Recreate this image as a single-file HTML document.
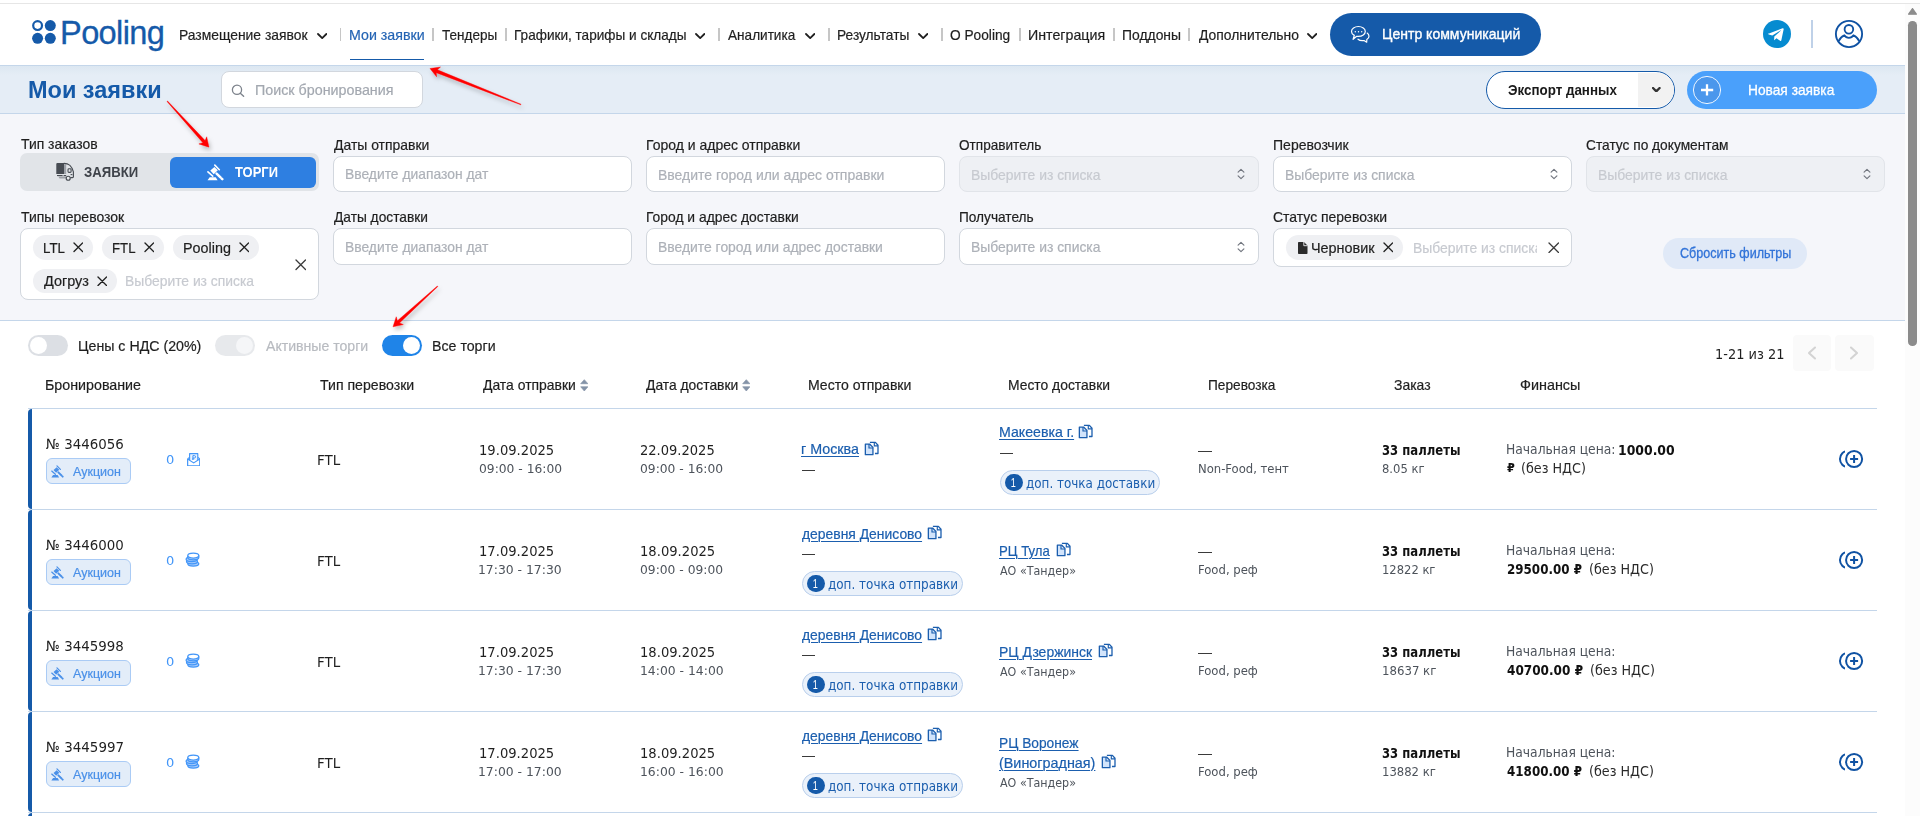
<!DOCTYPE html>
<html lang="ru"><head><meta charset="utf-8"><title>Pooling — Мои заявки</title>
<style>
html,body{margin:0;padding:0;background:#fff;overflow:hidden}
#root{position:relative;width:1920px;height:816px;overflow:hidden;background:#fff}
.b{position:absolute;box-sizing:border-box;display:block}
.t{position:absolute;white-space:nowrap;line-height:1;transform-origin:0 50%}
.f-ls{font-family:"Liberation Sans",sans-serif;-webkit-text-stroke:0.2px currentColor}
.f-dv{font-family:"DejaVu Sans",sans-serif}
.f-dvc{font-family:"DejaVu Sans Condensed","DejaVu Sans",sans-serif;font-stretch:condensed}
a.t{text-decoration:underline}

</style></head><body>
<div id="root">
<div class="b " style="left:0px;top:0px;width:1920px;height:66px;background:#fff;"></div>
<div class="b " style="left:0px;top:3px;width:1920px;height:1px;background:#e6e6e6;"></div>
<div class="b " style="left:0px;top:65px;width:1905px;height:1px;background:#c4d6ea;"></div>
<svg class="b" style="left:31px;top:19px;" width="26" height="26" viewBox="0 0 26 26"><circle cx="6.6" cy="6.6" r="4.4" fill="none" stroke="#155aa9" stroke-width="2.2"/><circle cx="19.3" cy="6.6" r="5.5" fill="#155aa9"/><circle cx="6.6" cy="19.3" r="5.5" fill="#155aa9"/><circle cx="19.3" cy="19.3" r="5.5" fill="#155aa9"/></svg>
<span class="t f-ls " style="left:60.1px;top:16.72px;font-size:32.6px;color:#155aa9;letter-spacing:-0.66px;-webkit-text-stroke:0.3px #155aa9;">Pooling</span>
<span class="t f-ls nav" style="left:179.39px;top:28.05px;font-size:14.6px;color:#1f1f1f;transform:scaleX(0.9508);">Размещение заявок</span>
<svg class="b" style="left:316.8px;top:32.550000000000004px;" width="10.4" height="6.1" viewBox="0 0 10.4 6.1"><path d="M1 1 L5.2 5.1 L9.4 1" fill="none" stroke="#1f1f1f" stroke-width="1.8" stroke-linecap="round" stroke-linejoin="round"/></svg>
<span class="t f-ls nav" style="left:349.36px;top:28.05px;font-size:14.6px;color:#2464b4;transform:scaleX(0.9737);">Мои заявки</span>
<span class="t f-ls nav" style="left:442.23px;top:28.05px;font-size:14.6px;color:#1f1f1f;transform:scaleX(0.927);">Тендеры</span>
<span class="t f-ls nav" style="left:514.41px;top:28.05px;font-size:14.6px;color:#1f1f1f;transform:scaleX(0.9309);">Графики, тарифы и склады</span>
<svg class="b" style="left:694.8px;top:32.550000000000004px;" width="10.4" height="6.1" viewBox="0 0 10.4 6.1"><path d="M1 1 L5.2 5.1 L9.4 1" fill="none" stroke="#1f1f1f" stroke-width="1.8" stroke-linecap="round" stroke-linejoin="round"/></svg>
<span class="t f-ls nav" style="left:728.2px;top:28.05px;font-size:14.6px;color:#1f1f1f;transform:scaleX(0.9312);">Аналитика</span>
<svg class="b" style="left:804.5999999999999px;top:32.550000000000004px;" width="10.4" height="6.1" viewBox="0 0 10.4 6.1"><path d="M1 1 L5.2 5.1 L9.4 1" fill="none" stroke="#1f1f1f" stroke-width="1.8" stroke-linecap="round" stroke-linejoin="round"/></svg>
<span class="t f-ls nav" style="left:837.1px;top:28.05px;font-size:14.6px;color:#1f1f1f;transform:scaleX(0.9404);">Результаты</span>
<svg class="b" style="left:917.8px;top:32.550000000000004px;" width="10.4" height="6.1" viewBox="0 0 10.4 6.1"><path d="M1 1 L5.2 5.1 L9.4 1" fill="none" stroke="#1f1f1f" stroke-width="1.8" stroke-linecap="round" stroke-linejoin="round"/></svg>
<span class="t f-ls nav" style="left:950.18px;top:28.05px;font-size:14.6px;color:#1f1f1f;transform:scaleX(0.9394);">О Pooling</span>
<span class="t f-ls nav" style="left:1027.86px;top:28.05px;font-size:14.6px;color:#1f1f1f;transform:scaleX(0.9738);">Интеграция</span>
<span class="t f-ls nav" style="left:1121.89px;top:28.05px;font-size:14.6px;color:#1f1f1f;transform:scaleX(0.9522);">Поддоны</span>
<span class="t f-ls nav" style="left:1198.63px;top:28.05px;font-size:14.6px;color:#1f1f1f;transform:scaleX(0.9512);">Дополнительно</span>
<svg class="b" style="left:1306.8px;top:32.550000000000004px;" width="10.4" height="6.1" viewBox="0 0 10.4 6.1"><path d="M1 1 L5.2 5.1 L9.4 1" fill="none" stroke="#1f1f1f" stroke-width="1.8" stroke-linecap="round" stroke-linejoin="round"/></svg>
<div class="b " style="left:339.9px;top:27.5px;width:1.4px;height:13.5px;background:#c6c6c6;"></div>
<div class="b " style="left:432.2px;top:27.5px;width:1.4px;height:13.5px;background:#c6c6c6;"></div>
<div class="b " style="left:505.4px;top:27.5px;width:1.4px;height:13.5px;background:#c6c6c6;"></div>
<div class="b " style="left:718.4px;top:27.5px;width:1.4px;height:13.5px;background:#c6c6c6;"></div>
<div class="b " style="left:828.4px;top:27.5px;width:1.4px;height:13.5px;background:#c6c6c6;"></div>
<div class="b " style="left:941.1999999999999px;top:27.5px;width:1.4px;height:13.5px;background:#c6c6c6;"></div>
<div class="b " style="left:1019.4px;top:27.5px;width:1.4px;height:13.5px;background:#c6c6c6;"></div>
<div class="b " style="left:1113.4px;top:27.5px;width:1.4px;height:13.5px;background:#c6c6c6;"></div>
<div class="b " style="left:1188.2px;top:27.5px;width:1.4px;height:13.5px;background:#c6c6c6;"></div>
<div class="b " style="left:350px;top:58.7px;width:74px;height:1.4px;background:#155aa9;"></div>
<div class="b " style="left:1330px;top:13px;width:211px;height:43px;background:#155aa9;border-radius:22px;"></div>
<svg class="b" style="left:1350px;top:25px;" width="21" height="19" viewBox="0 0 21 19"><path d="M4.300 10.400C2.600 9.500 1.500 8.100 1.500 6.400C1.500 3.700 4.600 1.500 8.400 1.500S15.300 3.700 15.300 6.400S12.200 11.400 8.400 11.400C7.800 11.400 7.200 11.350 6.700 11.250L3.100 14.300Z" fill="none" stroke="#fff" stroke-width="1.200" stroke-linejoin="round"/><path d="M17.200 8.100C18.300 8.900 19 10 19 11.200C19 12.600 18.100 13.800 16.800 14.600L16.700 17.200L14 15.500C13.400 15.600 12.800 15.700 12.200 15.700C10.500 15.700 9 15.100 8 14.200" fill="none" stroke="#fff" stroke-width="1.200" stroke-linejoin="round" stroke-linecap="round"/><circle cx="5.300" cy="6.700" r=".7" fill="#fff"/><circle cx="8.500" cy="6.700" r=".7" fill="#fff"/><circle cx="11.700" cy="6.700" r=".7" fill="#fff"/></svg>
<span class="t f-ls " style="left:1382.08px;top:26.95px;font-size:14.6px;color:#fff;transform:scaleX(0.9624);-webkit-text-stroke:0.35px #fff;">Центр коммуникаций</span>
<svg class="b" style="left:1763px;top:20px;" width="28" height="28" viewBox="0 0 28 28"><circle cx="14" cy="14" r="14" fill="#068bd0"/><path d="M6 13.600l13.600-5.400c.65-.25 1.250.15 1.050 1.050l-2.300 10.900c-.18.800-.65.980-1.300.62l-3.550-2.620-1.720 1.650c-.2.200-.36.360-.72.360l.25-3.620 6.600-5.950c.3-.26-.06-.4-.44-.15l-8.150 5.130-3.520-1.100c-.76-.24-.78-.76.160-1.130z" fill="#fff"/></svg>
<div class="b " style="left:1811px;top:20px;width:1.6px;height:28px;background:#bfd1e8;"></div>
<svg class="b" style="left:1834px;top:19px;" width="30" height="30" viewBox="0 0 30 30"><circle cx="15" cy="15" r="13.100" fill="none" stroke="#0f52a3" stroke-width="1.850"/><circle cx="14.900" cy="10.300" r="4.300" fill="none" stroke="#0f52a3" stroke-width="1.850"/><path d="M4.500 22.300C5.800 19.300 8 17.200 10.300 16.300C11.300 17.900 13 18.900 14.900 18.900S18.500 17.900 19.500 16.300C21.800 17.200 24 19.300 25.400 22.300" fill="none" stroke="#0f52a3" stroke-width="1.850" stroke-linejoin="round"/></svg>
<div class="b " style="left:1905px;top:4px;width:15px;height:812px;background:#fcfcfc;"></div>
<div class="b " style="left:1908.2px;top:21px;width:8.6px;height:325px;background:#8b8b8b;border-radius:4.300px;"></div>
<svg class="b" style="left:1907px;top:7px;" width="11" height="9" viewBox="0 0 11 9"><path d="M1.600 7.200 L5.500 1.600 L9.400 7.200z" fill="#8b8b8b" stroke="#8b8b8b" stroke-width="1.200" stroke-linejoin="round"/></svg>
<div class="b " style="left:0px;top:66px;width:1905px;height:47px;background:#e5edf6;"></div>
<div class="b " style="left:0px;top:66px;width:1905px;height:9px;background:linear-gradient(#dce7f1,#e5edf6);"></div>
<div class="b " style="left:0px;top:113px;width:1905px;height:1px;background:#c4d6ea;"></div>
<span class="t f-ls " style="left:27.87px;top:79.17px;font-size:23.2px;color:#155aa9;font-weight:700;-webkit-text-stroke:0;transform:scaleX(1.0126);">Мои заявки</span>
<div class="b " style="left:220.5px;top:71px;width:202px;height:37px;background:#fff;border:1px solid #d2d7de;border-radius:8px;"></div>
<svg class="b" style="left:231px;top:84px;" width="14" height="13" viewBox="0 0 14 13"><circle cx="6" cy="5.800" r="4.600" fill="none" stroke="#7d838c" stroke-width="1.300"/><path d="M9.300 9.200l3.300 3" stroke="#7d838c" stroke-width="1.400" stroke-linecap="round"/></svg>
<span class="t f-ls " style="left:255.16px;top:82.82px;font-size:14.4px;color:#a3a8b0;transform:scaleX(0.9936);">Поиск бронирования</span>
<div class="b " style="left:1486px;top:71px;width:189px;height:38px;background:#fff;border:1.300px solid #155aa9;border-radius:19px;"><div class="b" style="left:150.800px;top:0.800px;width:35.800px;height:33.800px;background:#f2f2f2;border-radius:0 17px 17px 0"></div></div>
<span class="t f-ls " style="left:1508.27px;top:83.05px;font-size:14.6px;color:#1a1a1a;font-weight:700;-webkit-text-stroke:0;transform:scaleX(0.9158);">Экспорт данных</span>
<svg class="b" style="left:1652.0px;top:87.0px;" width="8.6" height="5.4" viewBox="0 0 8.6 5.4"><path d="M1 1 L4.3 4.4 L7.6 1" fill="none" stroke="#333" stroke-width="2.3" stroke-linecap="round" stroke-linejoin="round"/></svg>
<div class="b " style="left:1687px;top:71px;width:190px;height:38px;background:#4aa0fb;border-radius:19px;"></div>
<svg class="b" style="left:1692px;top:75px;" width="30" height="30" viewBox="0 0 30 30"><circle cx="15" cy="15" r="13.600" fill="#4b97ec" stroke="#fff" stroke-width="0.9"/><path d="M15 9.200v11.200M9 15h12.200" stroke="#fff" stroke-width="2.300"/></svg>
<span class="t f-ls " style="left:1748.2px;top:83.05px;font-size:14.6px;color:#fff;transform:scaleX(0.942);-webkit-text-stroke:0.3px #fff;">Новая заявка</span>
<div class="b " style="left:0px;top:114px;width:1905px;height:206px;background:#f5f6fa;"></div>
<div class="b " style="left:0px;top:320px;width:1905px;height:1px;background:#c4d6ea;"></div>
<span class="t f-ls " style="left:20.52px;top:136.79px;font-size:14.2px;color:#1f1f1f;transform:scaleX(0.9809);">Тип заказов</span>
<span class="t f-ls " style="left:333.53px;top:137.99px;font-size:14.2px;color:#1f1f1f;transform:scaleX(0.9827);">Даты отправки</span>
<span class="t f-ls " style="left:645.58px;top:137.99px;font-size:14.2px;color:#1f1f1f;transform:scaleX(0.9862);">Город и адрес отправки</span>
<span class="t f-ls " style="left:959.39px;top:137.99px;font-size:14.2px;color:#1f1f1f;transform:scaleX(0.9578);">Отправитель</span>
<span class="t f-ls " style="left:1272.58px;top:137.99px;font-size:14.2px;color:#1f1f1f;transform:scaleX(0.9884);">Перевозчик</span>
<span class="t f-ls " style="left:1585.81px;top:137.99px;font-size:14.2px;color:#1f1f1f;transform:scaleX(0.9678);">Статус по документам</span>
<div class="b " style="left:333px;top:156px;width:299px;height:36px;background:#fff;border:1px solid #d2d7de;border-radius:8px;"></div>
<span class="t f-ls " style="left:345.49px;top:167.19px;font-size:14.2px;color:#adb1b8;transform:scaleX(0.9766);">Введите диапазон дат</span>
<div class="b " style="left:646px;top:156px;width:299px;height:36px;background:#fff;border:1px solid #d2d7de;border-radius:8px;"></div>
<span class="t f-ls " style="left:658.48px;top:167.59px;font-size:14.2px;color:#adb1b8;transform:scaleX(0.9863);">Введите город или адрес отправки</span>
<div class="b " style="left:959px;top:156px;width:300px;height:36px;background:#eef0f4;border:1px solid #e1e4e9;border-radius:8px;"></div>
<span class="t f-ls " style="left:971.49px;top:167.59px;font-size:14.2px;color:#c7cad0;transform:scaleX(0.9804);">Выберите из списка</span>
<svg class="b" style="left:1235.7px;top:167.0px;" width="10" height="14" viewBox="0 0 10 14"><path d="M2.100 5.100L5 2.300l2.900 2.800M2.100 8.900L5 11.700l2.900-2.800" fill="none" stroke="#70757e" stroke-width="1.150" stroke-linecap="round" stroke-linejoin="round"/></svg>
<div class="b " style="left:1273px;top:156px;width:299px;height:36px;background:#fff;border:1px solid #d2d7de;border-radius:8px;"></div>
<span class="t f-ls " style="left:1285.49px;top:167.59px;font-size:14.2px;color:#adb1b8;transform:scaleX(0.9804);">Выберите из списка</span>
<svg class="b" style="left:1548.7px;top:167.0px;" width="10" height="14" viewBox="0 0 10 14"><path d="M2.100 5.100L5 2.300l2.900 2.800M2.100 8.900L5 11.700l2.900-2.800" fill="none" stroke="#70757e" stroke-width="1.150" stroke-linecap="round" stroke-linejoin="round"/></svg>
<div class="b " style="left:1586px;top:156px;width:299px;height:36px;background:#eef0f4;border:1px solid #e1e4e9;border-radius:8px;"></div>
<span class="t f-ls " style="left:1598.49px;top:167.59px;font-size:14.2px;color:#c7cad0;transform:scaleX(0.9804);">Выберите из списка</span>
<svg class="b" style="left:1861.7px;top:167.0px;" width="10" height="14" viewBox="0 0 10 14"><path d="M2.100 5.100L5 2.300l2.900 2.800M2.100 8.900L5 11.700l2.900-2.800" fill="none" stroke="#70757e" stroke-width="1.150" stroke-linecap="round" stroke-linejoin="round"/></svg>
<div class="b " style="left:20px;top:153px;width:299px;height:38px;background:#e1e4e8;border-radius:7px;"></div>
<div class="b " style="left:170px;top:156.5px;width:146px;height:31px;background:#2e7fe1;border-radius:6px;"></div>
<svg class="b" style="left:55px;top:162px;" width="20" height="19" viewBox="0 0 20 19"><path d="M1.300 2a1 1 0 0 1 1-1H9v11H1.300z" fill="#474c53"/><path d="M9 2.300h2.200V12H9z" fill="#9da1a8"/><path d="M9 1.400c4.500 0 7.500 1.600 9.400 8.500v4.800c0 .5-.4.900-.9.900h-1.800" fill="none" stroke="#474c53" stroke-width="1.150" stroke-linecap="round"/><rect x="13" y="6.800" width="3.100" height="3.600" rx=".9" fill="none" stroke="#474c53" stroke-width="1.100"/><path d="M15.600 12.600h1.800" stroke="#474c53" stroke-width="1.100"/><path d="M2 13h5.600v1.100H2z" fill="#474c53"/><path d="M3.300 14.500h8l-.5 2H4.500z" fill="#9da1a8"/><path d="M8.600 13h2.600v1.100H8.600z" fill="#474c53"/><circle cx="13.200" cy="16.200" r="2" fill="#e9ebee" stroke="#474c53" stroke-width="1.150"/></svg>
<span class="t f-ls " style="left:83.67px;top:165.74px;font-size:13.9px;color:#3f434a;font-weight:700;-webkit-text-stroke:0;transform:scaleX(0.9473);">ЗАЯВКИ</span>
<svg class="b" style="left:206.5px;top:163.7px;" width="17" height="17" viewBox="0 0 17 17"><g stroke="#fff" stroke-linecap="round" fill="none"><path d="M7.800 1.100L12.300 5.700M0.950 7.900L5.700 12.100" stroke-width="1.600"/><path d="M9.600 9.600L13.500 13.400M14.700 14.600L15.300 15.200" stroke-width="2.500"/></g><g fill="#fff"><path d="M3.300 6.500L7.400 3.100L10.800 6.300L6.700 10.200z"/><path d="M0.500 16.300L10.600 16.300L8.700 13.200L2.700 13.200z"/></g></svg>
<span class="t f-ls " style="left:235.37px;top:165.74px;font-size:13.9px;color:#fff;font-weight:700;-webkit-text-stroke:0;transform:scaleX(0.9326);">ТОРГИ</span>
<span class="t f-ls " style="left:20.52px;top:209.99px;font-size:14.2px;color:#1f1f1f;transform:scaleX(0.9855);">Типы перевозок</span>
<span class="t f-ls " style="left:333.53px;top:209.99px;font-size:14.2px;color:#1f1f1f;transform:scaleX(0.9681);">Даты доставки</span>
<span class="t f-ls " style="left:645.59px;top:209.99px;font-size:14.2px;color:#1f1f1f;transform:scaleX(0.977);">Город и адрес доставки</span>
<span class="t f-ls " style="left:958.91px;top:209.99px;font-size:14.2px;color:#1f1f1f;transform:scaleX(0.9618);">Получатель</span>
<span class="t f-ls " style="left:1273.0px;top:209.99px;font-size:14.2px;color:#1f1f1f;transform:scaleX(0.9842);">Статус перевозки</span>
<div class="b " style="left:333px;top:228px;width:299px;height:37px;background:#fff;border:1px solid #d2d7de;border-radius:8px;"></div>
<span class="t f-ls " style="left:345.49px;top:239.99px;font-size:14.2px;color:#adb1b8;transform:scaleX(0.9766);">Введите диапазон дат</span>
<div class="b " style="left:646px;top:228px;width:299px;height:37px;background:#fff;border:1px solid #d2d7de;border-radius:8px;"></div>
<span class="t f-ls " style="left:658.49px;top:239.99px;font-size:14.2px;color:#adb1b8;transform:scaleX(0.98);">Введите город или адрес доставки</span>
<div class="b " style="left:959px;top:228px;width:300px;height:37px;background:#fff;border:1px solid #d2d7de;border-radius:8px;"></div>
<span class="t f-ls " style="left:971.49px;top:239.99px;font-size:14.2px;color:#adb1b8;transform:scaleX(0.9804);">Выберите из списка</span>
<svg class="b" style="left:1235.7px;top:239.5px;" width="10" height="14" viewBox="0 0 10 14"><path d="M2.100 5.100L5 2.300l2.900 2.800M2.100 8.900L5 11.700l2.900-2.800" fill="none" stroke="#70757e" stroke-width="1.150" stroke-linecap="round" stroke-linejoin="round"/></svg>
<div class="b " style="left:20px;top:228px;width:299px;height:72px;background:#fff;border:1px solid #d2d7de;border-radius:8px;"></div>
<div class="b " style="left:33px;top:235px;width:60px;height:25px;background:#eff0f3;border-radius:13px;"></div>
<span class="t f-ls " style="left:43.44px;top:241.19px;font-size:14.2px;color:#1f1f1f;transform:scaleX(0.9374);">LTL</span>
<svg class="b" style="left:72.7px;top:242.39999999999998px;" width="10.6" height="10.6" viewBox="0 0 10.6 10.6"><path d="M1 1L9.6 9.6M9.6 1L1 9.6" stroke="#222" stroke-width="1.35" stroke-linecap="round"/></svg>
<div class="b " style="left:102px;top:235px;width:62px;height:25px;background:#eff0f3;border-radius:13px;"></div>
<span class="t f-ls " style="left:112.44px;top:241.19px;font-size:14.2px;color:#1f1f1f;transform:scaleX(0.9305);">FTL</span>
<svg class="b" style="left:143.7px;top:242.39999999999998px;" width="10.6" height="10.6" viewBox="0 0 10.6 10.6"><path d="M1 1L9.6 9.6M9.6 1L1 9.6" stroke="#222" stroke-width="1.35" stroke-linecap="round"/></svg>
<div class="b " style="left:173px;top:235px;width:86px;height:25px;background:#eff0f3;border-radius:13px;"></div>
<span class="t f-ls " style="left:183.35px;top:241.19px;font-size:14.2px;color:#1f1f1f;transform:scaleX(1.0111);">Pooling</span>
<svg class="b" style="left:238.7px;top:242.39999999999998px;" width="10.6" height="10.6" viewBox="0 0 10.6 10.6"><path d="M1 1L9.6 9.6M9.6 1L1 9.6" stroke="#222" stroke-width="1.35" stroke-linecap="round"/></svg>
<div class="b " style="left:33px;top:269px;width:84px;height:24px;background:#eff0f3;border-radius:13px;"></div>
<span class="t f-ls " style="left:44.43px;top:274.49px;font-size:14.2px;color:#1f1f1f;transform:scaleX(1.0162);">Догруз</span>
<svg class="b" style="left:96.9px;top:275.9px;" width="10.6" height="10.6" viewBox="0 0 10.6 10.6"><path d="M1 1L9.6 9.6M9.6 1L1 9.6" stroke="#222" stroke-width="1.35" stroke-linecap="round"/></svg>
<span class="t f-ls " style="left:125.39px;top:274.49px;font-size:14.2px;color:#c7cad0;transform:scaleX(0.9766);">Выберите из списка</span>
<svg class="b" style="left:294.75px;top:259.05px;" width="11.5" height="11.5" viewBox="0 0 11.5 11.5"><path d="M1 1L10.5 10.5M10.5 1L1 10.5" stroke="#3a3a3a" stroke-width="1.3" stroke-linecap="round"/></svg>
<div class="b " style="left:1273px;top:228px;width:299px;height:39px;background:#fff;border:1px solid #d2d7de;border-radius:8px;"></div>
<div class="b " style="left:1286px;top:235px;width:117px;height:25px;background:#eff0f3;border-radius:13px;"></div>
<svg class="b" style="left:1298px;top:242px;" width="10" height="12" viewBox="0 0 10 12"><path d="M.8 0h5.200l3.500 3.500v7.700a.8.800 0 0 1-.8.800H.8a.8.800 0 0 1-.8-.8V.8A.8.800 0 0 1 .8 0z" fill="#2b2b2b"/><path d="M5.800 0v3.700h3.700" fill="none" stroke="#eff0f3" stroke-width=".9"/></svg>
<span class="t f-ls " style="left:1311.35px;top:240.99px;font-size:14.2px;color:#1f1f1f;transform:scaleX(1.0153);">Черновик</span>
<svg class="b" style="left:1382.5px;top:242.29999999999998px;" width="10.6" height="10.6" viewBox="0 0 10.6 10.6"><path d="M1 1L9.6 9.6M9.6 1L1 9.6" stroke="#222" stroke-width="1.35" stroke-linecap="round"/></svg>
<div class="b " style="left:1412.5px;top:236px;width:124px;height:24px;overflow:hidden;"><span class="t f-ls" style="left:0;top:4.99px;font-size:14.2px;color:#c7cad0;transform:scaleX(0.9796)">Выберите из списка</span></div>
<svg class="b" style="left:1547.75px;top:241.85px;" width="11.5" height="11.5" viewBox="0 0 11.5 11.5"><path d="M1 1L10.5 10.5M10.5 1L1 10.5" stroke="#3a3a3a" stroke-width="1.3" stroke-linecap="round"/></svg>
<div class="b " style="left:1663px;top:238px;width:144px;height:31px;background:#e0e9f7;border-radius:16px;"></div>
<span class="t f-ls " style="left:1679.77px;top:246.29px;font-size:14.2px;color:#3173d8;transform:scaleX(0.8858);-webkit-text-stroke:0.3px #3173d8;">Сбросить фильтры</span>
<div class="b " style="left:28px;top:335px;width:40px;height:21px;background:#dcdfe4;border-radius:11px;"></div>
<div class="b " style="left:30px;top:337px;width:17px;height:17px;background:#fff;border-radius:9px;"></div>
<span class="t f-ls " style="left:78.06px;top:339.05px;font-size:14.6px;color:#1f1f1f;transform:scaleX(0.9723);">Цены с НДС (20%)</span>
<div class="b " style="left:215px;top:335px;width:40px;height:21px;background:#e7e9ec;border-radius:11px;"></div>
<div class="b " style="left:236px;top:337px;width:17px;height:17px;background:#f5f6f8;border-radius:9px;"></div>
<span class="t f-ls " style="left:265.7px;top:339.05px;font-size:14.6px;color:#b8bbc0;transform:scaleX(0.9657);">Активные торги</span>
<div class="b " style="left:382px;top:335px;width:40px;height:21px;background:#1f84e8;border-radius:11px;"></div>
<div class="b " style="left:403px;top:337px;width:17px;height:17px;background:#fff;border-radius:9px;"></div>
<span class="t f-ls " style="left:431.87px;top:339.05px;font-size:14.6px;color:#1f1f1f;transform:scaleX(0.9717);">Все торги</span>
<span class="t f-dvc " style="left:1714.86px;top:347.93px;font-size:13.8px;color:#1f1f1f;transform:scaleX(1.0432);">1-21 из 21</span>
<div class="b " style="left:1793px;top:335px;width:38px;height:35.5px;background:#fafafa;border-radius:4px;"></div>
<div class="b " style="left:1835px;top:335px;width:38.7px;height:35.5px;background:#fafafa;border-radius:4px;"></div>
<svg class="b" style="left:1807.2px;top:346px;" width="10" height="14" viewBox="0 0 10 14"><path d="M8 1.500L2 7l6 5.500" fill="none" stroke="#d3d3d3" stroke-width="2.100" stroke-linecap="round" stroke-linejoin="round"/></svg>
<svg class="b" style="left:1848.8px;top:346px;" width="10" height="14" viewBox="0 0 10 14"><path d="M2 1.500L8 7l-6 5.500" fill="none" stroke="#d3d3d3" stroke-width="2.100" stroke-linecap="round" stroke-linejoin="round"/></svg>
<span class="t f-ls " style="left:45.36px;top:377.82px;font-size:14.4px;color:#1f1f1f;transform:scaleX(0.9907);">Бронирование</span>
<span class="t f-ls " style="left:320.42px;top:377.82px;font-size:14.4px;color:#1f1f1f;transform:scaleX(0.9808);">Тип перевозки</span>
<span class="t f-ls " style="left:483.13px;top:377.82px;font-size:14.4px;color:#1f1f1f;transform:scaleX(0.9674);">Дата отправки</span>
<span class="t f-ls " style="left:645.63px;top:377.82px;font-size:14.4px;color:#1f1f1f;transform:scaleX(0.9621);">Дата доставки</span>
<span class="t f-ls " style="left:808.08px;top:377.82px;font-size:14.4px;color:#1f1f1f;transform:scaleX(0.9764);">Место отправки</span>
<span class="t f-ls " style="left:1008.09px;top:377.82px;font-size:14.4px;color:#1f1f1f;transform:scaleX(0.9638);">Место доставки</span>
<span class="t f-ls " style="left:1208.11px;top:377.82px;font-size:14.4px;color:#1f1f1f;transform:scaleX(0.9503);">Перевозка</span>
<span class="t f-ls " style="left:1393.91px;top:377.82px;font-size:14.4px;color:#1f1f1f;transform:scaleX(0.9695);">Заказ</span>
<span class="t f-ls " style="left:1519.91px;top:377.82px;font-size:14.4px;color:#1f1f1f;transform:scaleX(0.9986);">Финансы</span>
<svg class="b" style="left:579.5px;top:378.5px;" width="8.6" height="12.6" viewBox="0 0 8.600 12.600"><path d="M4.300 0.700L7.900 4.700H.7z" fill="#8493a8" stroke="#8493a8" stroke-width=".7" stroke-linejoin="round"/><path d="M4.300 12L7.900 7.800H.7z" fill="#8493a8" stroke="#8493a8" stroke-width=".7" stroke-linejoin="round"/></svg>
<svg class="b" style="left:741.5px;top:378.5px;" width="8.6" height="12.6" viewBox="0 0 8.600 12.600"><path d="M4.300 0.700L7.900 4.700H.7z" fill="#8493a8" stroke="#8493a8" stroke-width=".7" stroke-linejoin="round"/><path d="M4.300 12L7.900 7.800H.7z" fill="#8493a8" stroke="#8493a8" stroke-width=".7" stroke-linejoin="round"/></svg>
<div class="b " style="left:28px;top:408px;width:1849px;height:1px;background:#c4d6ea;"></div>
<div class="b " style="left:28px;top:409px;width:4px;height:100px;background:#155aa9;border-radius:4px 0 0 4px;"></div>
<div class="b " style="left:28px;top:509px;width:1849px;height:1px;background:#c4d6ea;"></div>
<span class="t f-dvc " style="left:45.83px;top:436.86px;font-size:14px;color:#1f1f1f;transform:scaleX(1.0621);">№ 3446056</span>
<div class="b " style="left:46px;top:458px;width:85px;height:26px;background:#e3edf9;border:1px solid #aacbf5;border-radius:6px;"></div>
<svg class="b" style="left:50.8px;top:465.4px;" width="13" height="13" viewBox="0 0 17 17"><g stroke="#4a90e8" stroke-linecap="round" fill="none"><path d="M7.800 1.100L12.300 5.700M0.950 7.900L5.700 12.100" stroke-width="1.600"/><path d="M9.600 9.600L13.500 13.400M14.700 14.600L15.300 15.200" stroke-width="2.500"/></g><g fill="#4a90e8"><path d="M3.300 6.500L7.400 3.100L10.800 6.300L6.700 10.200z"/><path d="M0.500 16.300L10.600 16.300L8.700 13.200L2.700 13.200z"/></g></svg>
<span class="t f-ls " style="left:73.4px;top:464.50px;font-size:13px;color:#4a90e8;transform:scaleX(0.9603);">Аукцион</span>
<span class="t f-dvc " style="left:165.93px;top:453.81px;font-size:12.4px;color:#4396f8;transform:scaleX(1.1698);">0</span>
<svg class="b" style="left:186.8px;top:452.8px;" width="13.4" height="13.4" viewBox="0 0 13.400 13.400"><path d="M2.600 7V.65h8.200V7" fill="#eaf3fe" stroke="#4396f8" stroke-width="1.150" stroke-linejoin="round"/><path d="M.65 5.800V12.750H12.750V5.800" fill="none" stroke="#4396f8" stroke-width="1.200" stroke-linejoin="round"/><path d="M.65 5.800L2.600 4.400M12.750 5.800L10.800 4.400" fill="none" stroke="#4396f8" stroke-width="1.100"/><path d="M.65 5.900l6.050 4 6.050-4" fill="none" stroke="#4396f8" stroke-width="1.150"/><path d="M5.900 7V2.600h1.500a1.200 1.200 0 0 1 0 2.400H5.900M5.100 5.950h2.100" fill="none" stroke="#4396f8" stroke-width="1"/></svg>
<span class="t f-dvc " style="left:317.16px;top:452.76px;font-size:14px;color:#1f1f1f;transform:scaleX(1.0653);">FTL</span>
<span class="t f-dvc " style="left:478.74px;top:443.16px;font-size:14px;color:#1f1f1f;transform:scaleX(1.0434);">19.09.2025</span>
<span class="t f-dvc " style="left:478.88px;top:462.00px;font-size:13px;color:#4d535b;transform:scaleX(1.051);">09:00 - 16:00</span>
<span class="t f-dvc " style="left:640.06px;top:443.16px;font-size:14px;color:#1f1f1f;transform:scaleX(1.0361);">22.09.2025</span>
<span class="t f-dvc " style="left:640.18px;top:462.00px;font-size:13px;color:#4d535b;transform:scaleX(1.051);">09:00 - 16:00</span>
<span class="t f-ls " style="left:800.8px;top:442.42px;font-size:14.4px;color:#1b5eae;transform:scaleX(0.9933);text-decoration:underline;text-decoration-thickness:1px;text-underline-offset:1.500px;">г Москва</span>
<svg class="b" style="left:864.3px;top:440.90000000000003px;" width="15.4" height="15" viewBox="0 0 15.400 15"><path d="M5.900 1.350H11.400L14 4.300V12.500H10.950" fill="none" stroke="#1b5eae" stroke-width="1.300" stroke-linejoin="round"/><path d="M10.300 1.350V4.800H14" fill="none" stroke="#1b5eae" stroke-width="1.150"/><path d="M1.350 3.050H5.600L8.950 6.400V13.650H1.350Z" fill="#d2e4fb" stroke="#1b5eae" stroke-width="1.300" stroke-linejoin="round"/><path d="M5 3.050V7H8.950" fill="none" stroke="#1b5eae" stroke-width="1.150"/></svg>
<div class="b " style="left:801.8px;top:469.5px;width:13.2px;height:1.1px;background:#3a3a3a;"></div>
<span class="t f-ls " style="left:999.27px;top:425.42px;font-size:14.4px;color:#1b5eae;transform:scaleX(0.9832);text-decoration:underline;text-decoration-thickness:1px;text-underline-offset:1.500px;">Макеевка г.</span>
<svg class="b" style="left:1078.05px;top:424.05px;" width="15.4" height="15" viewBox="0 0 15.400 15"><path d="M5.900 1.350H11.400L14 4.300V12.500H10.950" fill="none" stroke="#1b5eae" stroke-width="1.300" stroke-linejoin="round"/><path d="M10.300 1.350V4.800H14" fill="none" stroke="#1b5eae" stroke-width="1.150"/><path d="M1.350 3.050H5.600L8.950 6.400V13.650H1.350Z" fill="#d2e4fb" stroke="#1b5eae" stroke-width="1.300" stroke-linejoin="round"/><path d="M5 3.050V7H8.950" fill="none" stroke="#1b5eae" stroke-width="1.150"/></svg>
<div class="b " style="left:1000px;top:452.5px;width:13.2px;height:1.1px;background:#3a3a3a;"></div>
<div class="b " style="left:1000px;top:470.2px;width:160px;height:25px;background:#eaf1fa;border:1px solid #b9cfec;border-radius:13px;"></div>
<div class="b " style="left:1005px;top:473.9px;width:17.6px;height:17.6px;background:#155aa9;border-radius:9px;"></div>
<span class="t f-ls " style="left:1010.68px;top:476.73px;font-size:12.5px;color:#fff;transform:scaleX(0.6621);">1</span>
<span class="t f-dvc " style="left:1026.4px;top:476.06px;font-size:14px;color:#1b5eae;transform:scaleX(0.9492);">доп. точка доставки</span>
<div class="b " style="left:1198.4px;top:450.9px;width:13.2px;height:1.1px;background:#3a3a3a;"></div>
<span class="t f-dvc " style="left:1197.54px;top:461.70px;font-size:13px;color:#4d535b;transform:scaleX(0.9938);">Non-Food, тент</span>
<span class="t f-dvc " style="left:1382.12px;top:442.66px;font-size:14px;color:#111;font-weight:700;-webkit-text-stroke:0;transform:scaleX(0.9259);">33 паллеты</span>
<span class="t f-dvc " style="left:1382.13px;top:461.70px;font-size:13px;color:#4d535b;transform:scaleX(0.9904);">8.05 кг</span>
<span class="t f-dvc " style="left:1505.77px;top:443.08px;font-size:13.5px;color:#4d535b;transform:scaleX(1.0142);">Начальная цена:</span>
<span class="t f-dvc " style="left:1617.62px;top:442.66px;font-size:14px;color:#111;font-weight:700;-webkit-text-stroke:0;transform:scaleX(0.9879);">1000.00</span>
<span class="t f-dvc " style="left:1506.62px;top:463.47px;font-size:11.5px;color:#111;font-weight:700;-webkit-text-stroke:0;transform:scaleX(1.087);">₽</span>
<span class="t f-dvc " style="left:1521.34px;top:461.36px;font-size:14px;color:#2a2a2a;transform:scaleX(1.0126);">(без НДС)</span>
<svg class="b" style="left:1838px;top:448.9px;" width="26" height="20" viewBox="0 0 26 20"><circle cx="16.100" cy="10" r="8.050" fill="none" stroke="#0f52a3" stroke-width="1.950"/><path d="M16.100 6v8M12.100 10h8" stroke="#0f52a3" stroke-width="2"/><circle cx="10" cy="10" r="8.050" fill="none" stroke="#0f52a3" stroke-width="1.950" clip-path="url(#acl)"/></svg>
<div class="b " style="left:28px;top:510px;width:4px;height:100px;background:#155aa9;border-radius:4px 0 0 4px;"></div>
<div class="b " style="left:28px;top:610px;width:1849px;height:1px;background:#c4d6ea;"></div>
<span class="t f-dvc " style="left:45.83px;top:537.86px;font-size:14px;color:#1f1f1f;transform:scaleX(1.0621);">№ 3446000</span>
<div class="b " style="left:46px;top:559px;width:85px;height:26px;background:#e3edf9;border:1px solid #aacbf5;border-radius:6px;"></div>
<svg class="b" style="left:50.8px;top:566.4px;" width="13" height="13" viewBox="0 0 17 17"><g stroke="#4a90e8" stroke-linecap="round" fill="none"><path d="M7.800 1.100L12.300 5.700M0.950 7.900L5.700 12.100" stroke-width="1.600"/><path d="M9.600 9.600L13.500 13.400M14.700 14.600L15.300 15.200" stroke-width="2.500"/></g><g fill="#4a90e8"><path d="M3.300 6.500L7.400 3.100L10.800 6.300L6.700 10.200z"/><path d="M0.500 16.300L10.600 16.300L8.700 13.200L2.700 13.200z"/></g></svg>
<span class="t f-ls " style="left:73.4px;top:565.50px;font-size:13px;color:#4a90e8;transform:scaleX(0.9603);">Аукцион</span>
<span class="t f-dvc " style="left:165.93px;top:554.81px;font-size:12.4px;color:#4396f8;transform:scaleX(1.1698);">0</span>
<svg class="b" style="left:185.3px;top:552.4px;" width="15" height="15" viewBox="0 0 15 15"><ellipse cx="8.300" cy="11.800" rx="5.500" ry="2.300" fill="#a6cbfb" stroke="#4396f8" stroke-width="1.250"/><ellipse cx="7" cy="9.500" rx="5.500" ry="2.300" fill="#a6cbfb" stroke="#4396f8" stroke-width="1.250"/><ellipse cx="6.600" cy="7.200" rx="5.500" ry="2.300" fill="#a6cbfb" stroke="#4396f8" stroke-width="1.250"/><path d="M2.800 3.600v2c0 1.300 2.450 2.300 5.500 2.300s5.500-1 5.500-2.300v-2" fill="#a6cbfb" stroke="#4396f8" stroke-width="1.250"/><ellipse cx="8.300" cy="3.600" rx="5.500" ry="2.400" fill="#fff" stroke="#4396f8" stroke-width="1.250"/></svg>
<span class="t f-dvc " style="left:317.16px;top:553.76px;font-size:14px;color:#1f1f1f;transform:scaleX(1.0653);">FTL</span>
<span class="t f-dvc " style="left:478.74px;top:544.16px;font-size:14px;color:#1f1f1f;transform:scaleX(1.0434);">17.09.2025</span>
<span class="t f-dvc " style="left:478.32px;top:563.00px;font-size:13px;color:#4d535b;transform:scaleX(1.0581);">17:30 - 17:30</span>
<span class="t f-dvc " style="left:639.54px;top:544.16px;font-size:14px;color:#1f1f1f;transform:scaleX(1.0434);">18.09.2025</span>
<span class="t f-dvc " style="left:640.18px;top:563.00px;font-size:13px;color:#4d535b;transform:scaleX(1.051);">09:00 - 09:00</span>
<span class="t f-ls " style="left:801.66px;top:526.62px;font-size:14.4px;color:#1b5eae;transform:scaleX(0.9653);text-decoration:underline;text-decoration-thickness:1px;text-underline-offset:1.500px;">деревня Денисово</span>
<svg class="b" style="left:927.3px;top:525.1px;" width="15.4" height="15" viewBox="0 0 15.400 15"><path d="M5.900 1.350H11.400L14 4.300V12.500H10.950" fill="none" stroke="#1b5eae" stroke-width="1.300" stroke-linejoin="round"/><path d="M10.300 1.350V4.800H14" fill="none" stroke="#1b5eae" stroke-width="1.150"/><path d="M1.350 3.050H5.600L8.950 6.400V13.650H1.350Z" fill="#d2e4fb" stroke="#1b5eae" stroke-width="1.300" stroke-linejoin="round"/><path d="M5 3.050V7H8.950" fill="none" stroke="#1b5eae" stroke-width="1.150"/></svg>
<div class="b " style="left:801.8px;top:553.5px;width:13.2px;height:1.1px;background:#3a3a3a;"></div>
<div class="b " style="left:802px;top:571px;width:161px;height:25px;background:#eaf1fa;border:1px solid #b9cfec;border-radius:13px;"></div>
<div class="b " style="left:807px;top:574.7px;width:17.6px;height:17.6px;background:#155aa9;border-radius:9px;"></div>
<span class="t f-ls " style="left:812.68px;top:577.52px;font-size:12.5px;color:#fff;transform:scaleX(0.6621);">1</span>
<span class="t f-dvc " style="left:828.4px;top:576.86px;font-size:14px;color:#1b5eae;transform:scaleX(0.9519);">доп. точка отправки</span>
<span class="t f-ls " style="left:998.95px;top:543.52px;font-size:14.4px;color:#1b5eae;transform:scaleX(0.9143);text-decoration:underline;text-decoration-thickness:1px;text-underline-offset:1.500px;">РЦ Тула</span>
<svg class="b" style="left:1055.55px;top:542.3000000000001px;" width="15.4" height="15" viewBox="0 0 15.400 15"><path d="M5.900 1.350H11.400L14 4.300V12.500H10.950" fill="none" stroke="#1b5eae" stroke-width="1.300" stroke-linejoin="round"/><path d="M10.300 1.350V4.800H14" fill="none" stroke="#1b5eae" stroke-width="1.150"/><path d="M1.350 3.050H5.600L8.950 6.400V13.650H1.350Z" fill="#d2e4fb" stroke="#1b5eae" stroke-width="1.300" stroke-linejoin="round"/><path d="M5 3.050V7H8.950" fill="none" stroke="#1b5eae" stroke-width="1.150"/></svg>
<span class="t f-dvc " style="left:1000.34px;top:563.60px;font-size:13px;color:#4d535b;transform:scaleX(0.9504);">АО «Тандер»</span>
<div class="b " style="left:1198.4px;top:551.9px;width:13.2px;height:1.1px;background:#3a3a3a;"></div>
<span class="t f-dvc " style="left:1197.53px;top:562.70px;font-size:13px;color:#4d535b;transform:scaleX(0.9959);">Food, реф</span>
<span class="t f-dvc " style="left:1382.12px;top:543.66px;font-size:14px;color:#111;font-weight:700;-webkit-text-stroke:0;transform:scaleX(0.9259);">33 паллеты</span>
<span class="t f-dvc " style="left:1381.62px;top:562.70px;font-size:13px;color:#4d535b;transform:scaleX(0.9874);">12822 кг</span>
<span class="t f-dvc " style="left:1505.77px;top:544.08px;font-size:13.5px;color:#4d535b;transform:scaleX(1.0142);">Начальная цена:</span>
<span class="t f-dvc " style="left:1506.57px;top:562.36px;font-size:14px;color:#111;font-weight:700;-webkit-text-stroke:0;transform:scaleX(0.9451);">29500.00 ₽</span>
<span class="t f-dvc " style="left:1588.74px;top:562.36px;font-size:14px;color:#2a2a2a;transform:scaleX(1.0126);">(без НДС)</span>
<svg class="b" style="left:1838px;top:549.9px;" width="26" height="20" viewBox="0 0 26 20"><circle cx="16.100" cy="10" r="8.050" fill="none" stroke="#0f52a3" stroke-width="1.950"/><path d="M16.100 6v8M12.100 10h8" stroke="#0f52a3" stroke-width="2"/><circle cx="10" cy="10" r="8.050" fill="none" stroke="#0f52a3" stroke-width="1.950" clip-path="url(#acl)"/></svg>
<div class="b " style="left:28px;top:611px;width:4px;height:100px;background:#155aa9;border-radius:4px 0 0 4px;"></div>
<div class="b " style="left:28px;top:711px;width:1849px;height:1px;background:#c4d6ea;"></div>
<span class="t f-dvc " style="left:45.83px;top:638.86px;font-size:14px;color:#1f1f1f;transform:scaleX(1.0631);">№ 3445998</span>
<div class="b " style="left:46px;top:660px;width:85px;height:26px;background:#e3edf9;border:1px solid #aacbf5;border-radius:6px;"></div>
<svg class="b" style="left:50.8px;top:667.4px;" width="13" height="13" viewBox="0 0 17 17"><g stroke="#4a90e8" stroke-linecap="round" fill="none"><path d="M7.800 1.100L12.300 5.700M0.950 7.900L5.700 12.100" stroke-width="1.600"/><path d="M9.600 9.600L13.500 13.400M14.700 14.600L15.300 15.200" stroke-width="2.500"/></g><g fill="#4a90e8"><path d="M3.300 6.500L7.400 3.100L10.800 6.300L6.700 10.200z"/><path d="M0.500 16.300L10.600 16.300L8.700 13.200L2.700 13.200z"/></g></svg>
<span class="t f-ls " style="left:73.4px;top:666.50px;font-size:13px;color:#4a90e8;transform:scaleX(0.9603);">Аукцион</span>
<span class="t f-dvc " style="left:165.93px;top:655.81px;font-size:12.4px;color:#4396f8;transform:scaleX(1.1698);">0</span>
<svg class="b" style="left:185.3px;top:653.4px;" width="15" height="15" viewBox="0 0 15 15"><ellipse cx="8.300" cy="11.800" rx="5.500" ry="2.300" fill="#a6cbfb" stroke="#4396f8" stroke-width="1.250"/><ellipse cx="7" cy="9.500" rx="5.500" ry="2.300" fill="#a6cbfb" stroke="#4396f8" stroke-width="1.250"/><ellipse cx="6.600" cy="7.200" rx="5.500" ry="2.300" fill="#a6cbfb" stroke="#4396f8" stroke-width="1.250"/><path d="M2.800 3.600v2c0 1.300 2.450 2.300 5.500 2.300s5.500-1 5.500-2.300v-2" fill="#a6cbfb" stroke="#4396f8" stroke-width="1.250"/><ellipse cx="8.300" cy="3.600" rx="5.500" ry="2.400" fill="#fff" stroke="#4396f8" stroke-width="1.250"/></svg>
<span class="t f-dvc " style="left:317.16px;top:654.76px;font-size:14px;color:#1f1f1f;transform:scaleX(1.0653);">FTL</span>
<span class="t f-dvc " style="left:478.74px;top:645.16px;font-size:14px;color:#1f1f1f;transform:scaleX(1.0434);">17.09.2025</span>
<span class="t f-dvc " style="left:478.32px;top:664.00px;font-size:13px;color:#4d535b;transform:scaleX(1.0581);">17:30 - 17:30</span>
<span class="t f-dvc " style="left:639.54px;top:645.16px;font-size:14px;color:#1f1f1f;transform:scaleX(1.0434);">18.09.2025</span>
<span class="t f-dvc " style="left:639.62px;top:664.00px;font-size:13px;color:#4d535b;transform:scaleX(1.0581);">14:00 - 14:00</span>
<span class="t f-ls " style="left:801.66px;top:627.62px;font-size:14.4px;color:#1b5eae;transform:scaleX(0.9653);text-decoration:underline;text-decoration-thickness:1px;text-underline-offset:1.500px;">деревня Денисово</span>
<svg class="b" style="left:927.3px;top:626.1px;" width="15.4" height="15" viewBox="0 0 15.400 15"><path d="M5.900 1.350H11.400L14 4.300V12.500H10.950" fill="none" stroke="#1b5eae" stroke-width="1.300" stroke-linejoin="round"/><path d="M10.300 1.350V4.800H14" fill="none" stroke="#1b5eae" stroke-width="1.150"/><path d="M1.350 3.050H5.600L8.950 6.400V13.650H1.350Z" fill="#d2e4fb" stroke="#1b5eae" stroke-width="1.300" stroke-linejoin="round"/><path d="M5 3.050V7H8.950" fill="none" stroke="#1b5eae" stroke-width="1.150"/></svg>
<div class="b " style="left:801.8px;top:654.5px;width:13.2px;height:1.1px;background:#3a3a3a;"></div>
<div class="b " style="left:802px;top:672px;width:161px;height:25px;background:#eaf1fa;border:1px solid #b9cfec;border-radius:13px;"></div>
<div class="b " style="left:807px;top:675.7px;width:17.6px;height:17.6px;background:#155aa9;border-radius:9px;"></div>
<span class="t f-ls " style="left:812.68px;top:678.52px;font-size:12.5px;color:#fff;transform:scaleX(0.6621);">1</span>
<span class="t f-dvc " style="left:828.4px;top:677.86px;font-size:14px;color:#1b5eae;transform:scaleX(0.9519);">доп. точка отправки</span>
<span class="t f-ls " style="left:998.88px;top:644.52px;font-size:14.4px;color:#1b5eae;transform:scaleX(0.9687);text-decoration:underline;text-decoration-thickness:1px;text-underline-offset:1.500px;">РЦ Дзержинск</span>
<svg class="b" style="left:1097.85px;top:643.3000000000001px;" width="15.4" height="15" viewBox="0 0 15.400 15"><path d="M5.900 1.350H11.400L14 4.300V12.500H10.950" fill="none" stroke="#1b5eae" stroke-width="1.300" stroke-linejoin="round"/><path d="M10.300 1.350V4.800H14" fill="none" stroke="#1b5eae" stroke-width="1.150"/><path d="M1.350 3.050H5.600L8.950 6.400V13.650H1.350Z" fill="#d2e4fb" stroke="#1b5eae" stroke-width="1.300" stroke-linejoin="round"/><path d="M5 3.050V7H8.950" fill="none" stroke="#1b5eae" stroke-width="1.150"/></svg>
<span class="t f-dvc " style="left:1000.34px;top:664.60px;font-size:13px;color:#4d535b;transform:scaleX(0.9504);">АО «Тандер»</span>
<div class="b " style="left:1198.4px;top:652.9px;width:13.2px;height:1.1px;background:#3a3a3a;"></div>
<span class="t f-dvc " style="left:1197.53px;top:663.70px;font-size:13px;color:#4d535b;transform:scaleX(0.9959);">Food, реф</span>
<span class="t f-dvc " style="left:1382.12px;top:644.66px;font-size:14px;color:#111;font-weight:700;-webkit-text-stroke:0;transform:scaleX(0.9259);">33 паллеты</span>
<span class="t f-dvc " style="left:1381.59px;top:663.70px;font-size:13px;color:#4d535b;transform:scaleX(1.0046);">18637 кг</span>
<span class="t f-dvc " style="left:1505.77px;top:645.08px;font-size:13.5px;color:#4d535b;transform:scaleX(1.0142);">Начальная цена:</span>
<span class="t f-dvc " style="left:1506.96px;top:663.36px;font-size:14px;color:#111;font-weight:700;-webkit-text-stroke:0;transform:scaleX(0.9592);">40700.00 ₽</span>
<span class="t f-dvc " style="left:1590.24px;top:663.36px;font-size:14px;color:#2a2a2a;transform:scaleX(1.0126);">(без НДС)</span>
<svg class="b" style="left:1838px;top:650.9px;" width="26" height="20" viewBox="0 0 26 20"><circle cx="16.100" cy="10" r="8.050" fill="none" stroke="#0f52a3" stroke-width="1.950"/><path d="M16.100 6v8M12.100 10h8" stroke="#0f52a3" stroke-width="2"/><circle cx="10" cy="10" r="8.050" fill="none" stroke="#0f52a3" stroke-width="1.950" clip-path="url(#acl)"/></svg>
<div class="b " style="left:28px;top:712px;width:4px;height:100px;background:#155aa9;border-radius:4px 0 0 4px;"></div>
<div class="b " style="left:28px;top:812px;width:1849px;height:1px;background:#c4d6ea;"></div>
<span class="t f-dvc " style="left:45.83px;top:739.86px;font-size:14px;color:#1f1f1f;transform:scaleX(1.0662);">№ 3445997</span>
<div class="b " style="left:46px;top:761px;width:85px;height:26px;background:#e3edf9;border:1px solid #aacbf5;border-radius:6px;"></div>
<svg class="b" style="left:50.8px;top:768.4px;" width="13" height="13" viewBox="0 0 17 17"><g stroke="#4a90e8" stroke-linecap="round" fill="none"><path d="M7.800 1.100L12.300 5.700M0.950 7.900L5.700 12.100" stroke-width="1.600"/><path d="M9.600 9.600L13.500 13.400M14.700 14.600L15.300 15.200" stroke-width="2.500"/></g><g fill="#4a90e8"><path d="M3.300 6.500L7.400 3.100L10.800 6.300L6.700 10.200z"/><path d="M0.500 16.300L10.600 16.300L8.700 13.200L2.700 13.200z"/></g></svg>
<span class="t f-ls " style="left:73.4px;top:767.50px;font-size:13px;color:#4a90e8;transform:scaleX(0.9603);">Аукцион</span>
<span class="t f-dvc " style="left:165.93px;top:756.81px;font-size:12.4px;color:#4396f8;transform:scaleX(1.1698);">0</span>
<svg class="b" style="left:185.3px;top:754.4px;" width="15" height="15" viewBox="0 0 15 15"><ellipse cx="8.300" cy="11.800" rx="5.500" ry="2.300" fill="#a6cbfb" stroke="#4396f8" stroke-width="1.250"/><ellipse cx="7" cy="9.500" rx="5.500" ry="2.300" fill="#a6cbfb" stroke="#4396f8" stroke-width="1.250"/><ellipse cx="6.600" cy="7.200" rx="5.500" ry="2.300" fill="#a6cbfb" stroke="#4396f8" stroke-width="1.250"/><path d="M2.800 3.600v2c0 1.300 2.450 2.300 5.500 2.300s5.500-1 5.500-2.300v-2" fill="#a6cbfb" stroke="#4396f8" stroke-width="1.250"/><ellipse cx="8.300" cy="3.600" rx="5.500" ry="2.400" fill="#fff" stroke="#4396f8" stroke-width="1.250"/></svg>
<span class="t f-dvc " style="left:317.16px;top:755.76px;font-size:14px;color:#1f1f1f;transform:scaleX(1.0653);">FTL</span>
<span class="t f-dvc " style="left:478.74px;top:746.16px;font-size:14px;color:#1f1f1f;transform:scaleX(1.0434);">17.09.2025</span>
<span class="t f-dvc " style="left:478.32px;top:765.00px;font-size:13px;color:#4d535b;transform:scaleX(1.0581);">17:00 - 17:00</span>
<span class="t f-dvc " style="left:639.54px;top:746.16px;font-size:14px;color:#1f1f1f;transform:scaleX(1.0434);">18.09.2025</span>
<span class="t f-dvc " style="left:639.62px;top:765.00px;font-size:13px;color:#4d535b;transform:scaleX(1.0581);">16:00 - 16:00</span>
<span class="t f-ls " style="left:801.66px;top:728.62px;font-size:14.4px;color:#1b5eae;transform:scaleX(0.9653);text-decoration:underline;text-decoration-thickness:1px;text-underline-offset:1.500px;">деревня Денисово</span>
<svg class="b" style="left:927.3px;top:727.1px;" width="15.4" height="15" viewBox="0 0 15.400 15"><path d="M5.900 1.350H11.400L14 4.300V12.500H10.950" fill="none" stroke="#1b5eae" stroke-width="1.300" stroke-linejoin="round"/><path d="M10.300 1.350V4.800H14" fill="none" stroke="#1b5eae" stroke-width="1.150"/><path d="M1.350 3.050H5.600L8.950 6.400V13.650H1.350Z" fill="#d2e4fb" stroke="#1b5eae" stroke-width="1.300" stroke-linejoin="round"/><path d="M5 3.050V7H8.950" fill="none" stroke="#1b5eae" stroke-width="1.150"/></svg>
<div class="b " style="left:801.8px;top:755.5px;width:13.2px;height:1.1px;background:#3a3a3a;"></div>
<div class="b " style="left:802px;top:773px;width:161px;height:25px;background:#eaf1fa;border:1px solid #b9cfec;border-radius:13px;"></div>
<div class="b " style="left:807px;top:776.7px;width:17.6px;height:17.6px;background:#155aa9;border-radius:9px;"></div>
<span class="t f-ls " style="left:812.68px;top:779.52px;font-size:12.5px;color:#fff;transform:scaleX(0.6621);">1</span>
<span class="t f-dvc " style="left:828.4px;top:778.86px;font-size:14px;color:#1b5eae;transform:scaleX(0.9519);">доп. точка отправки</span>
<span class="t f-ls " style="left:999.2px;top:735.72px;font-size:14.4px;color:#1b5eae;transform:scaleX(0.9552);text-decoration:underline;text-decoration-thickness:1px;text-underline-offset:1.500px;">РЦ Воронеж</span>
<span class="t f-ls " style="left:999.44px;top:755.72px;font-size:14.4px;color:#1b5eae;transform:scaleX(0.9979);text-decoration:underline;text-decoration-thickness:1px;text-underline-offset:1.500px;">(Виноградная)</span>
<svg class="b" style="left:1101.3999999999999px;top:754.3000000000001px;" width="15.4" height="15" viewBox="0 0 15.400 15"><path d="M5.900 1.350H11.400L14 4.300V12.500H10.950" fill="none" stroke="#1b5eae" stroke-width="1.300" stroke-linejoin="round"/><path d="M10.300 1.350V4.800H14" fill="none" stroke="#1b5eae" stroke-width="1.150"/><path d="M1.350 3.050H5.600L8.950 6.400V13.650H1.350Z" fill="#d2e4fb" stroke="#1b5eae" stroke-width="1.300" stroke-linejoin="round"/><path d="M5 3.050V7H8.950" fill="none" stroke="#1b5eae" stroke-width="1.150"/></svg>
<span class="t f-dvc " style="left:1000.34px;top:775.60px;font-size:13px;color:#4d535b;transform:scaleX(0.9504);">АО «Тандер»</span>
<div class="b " style="left:1198.4px;top:753.9px;width:13.2px;height:1.1px;background:#3a3a3a;"></div>
<span class="t f-dvc " style="left:1197.53px;top:764.70px;font-size:13px;color:#4d535b;transform:scaleX(0.9959);">Food, реф</span>
<span class="t f-dvc " style="left:1382.12px;top:745.66px;font-size:14px;color:#111;font-weight:700;-webkit-text-stroke:0;transform:scaleX(0.9259);">33 паллеты</span>
<span class="t f-dvc " style="left:1381.61px;top:764.70px;font-size:13px;color:#4d535b;transform:scaleX(0.995);">13882 кг</span>
<span class="t f-dvc " style="left:1505.77px;top:746.08px;font-size:13.5px;color:#4d535b;transform:scaleX(1.0142);">Начальная цена:</span>
<span class="t f-dvc " style="left:1506.97px;top:764.36px;font-size:14px;color:#111;font-weight:700;-webkit-text-stroke:0;transform:scaleX(0.9464);">41800.00 ₽</span>
<span class="t f-dvc " style="left:1589.24px;top:764.36px;font-size:14px;color:#2a2a2a;transform:scaleX(1.0126);">(без НДС)</span>
<svg class="b" style="left:1838px;top:751.9px;" width="26" height="20" viewBox="0 0 26 20"><circle cx="16.100" cy="10" r="8.050" fill="none" stroke="#0f52a3" stroke-width="1.950"/><path d="M16.100 6v8M12.100 10h8" stroke="#0f52a3" stroke-width="2"/><circle cx="10" cy="10" r="8.050" fill="none" stroke="#0f52a3" stroke-width="1.950" clip-path="url(#acl)"/></svg>
<div class="b " style="left:28px;top:813px;width:4px;height:10px;background:#155aa9;border-radius:4px 0 0 0;"></div>
<svg width="0" height="0" style="position:absolute"><defs><filter id="ash" x="-30%" y="-30%" width="170%" height="170%"><feDropShadow dx="1.600" dy="3" stdDeviation="2.100" flood-color="#000" flood-opacity="0.26"/></filter><clipPath id="acl"><rect x="0" y="0" width="7.100" height="20"/></clipPath></defs></svg>
<svg class="b" style="left:421.7px;top:58.96px;overflow:visible;" width="109.03" height="57.87" viewBox="0 0 109.03 57.87"><polygon points="8.00,9.54 18.51,8.00 15.45,10.82 99.03,45.21 98.77,45.87 14.31,13.71 14.60,17.86" fill="#ff0000" stroke="#ff0000" stroke-width="0.4" stroke-linejoin="round" filter="url(#ash)"/></svg>
<svg class="b" style="left:158.54px;top:93.26px;overflow:visible;" width="59.96" height="66.14" viewBox="0 0 59.96 66.14"><polygon points="49.96,54.14 39.85,50.89 43.84,49.70 8.00,8.47 8.52,8.00 46.13,47.62 47.70,43.76" fill="#ff0000" stroke="#ff0000" stroke-width="0.4" stroke-linejoin="round" filter="url(#ash)"/></svg>
<svg class="b" style="left:384.7px;top:278.34px;overflow:visible;" width="62.84" height="60.86" viewBox="0 0 62.84 60.86"><polygon points="8.00,48.86 11.24,38.75 12.43,42.73 52.36,8.00 52.84,8.52 14.52,45.02 18.37,46.58" fill="#ff0000" stroke="#ff0000" stroke-width="0.4" stroke-linejoin="round" filter="url(#ash)"/></svg>
</div>
</body></html>
